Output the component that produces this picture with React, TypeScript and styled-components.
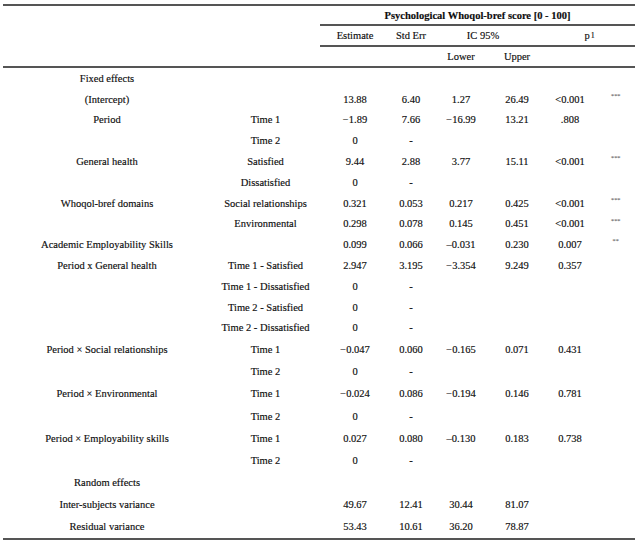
import React from "react";
import styled, { createGlobalStyle } from "styled-components";

const Global = createGlobalStyle`
  html, body { margin: 0; padding: 0; background: #fff; }
  body { font-family: "Liberation Serif", "Times New Roman", serif; color: #0d0d0d; }
`;

const COLS = "208px 109px 70px 42px 58px 54px 52px 39px";
const LINE = "2px solid #555";

const Page = styled.div`
  padding: 4px 0 0 3px;
`;

const Table = styled.div`
  width: 632px;
  border-top: ${LINE};
  border-bottom: ${LINE};
  font-size: 10.5px;
  -webkit-text-stroke: 0.15px #0d0d0d;
`;

const Head = styled.div`
  display: grid;
  grid-template-columns: ${COLS};
  grid-template-rows: 20px 21px 19px;
  border-bottom: ${LINE};
`;

const HeadCell = styled.div<{ $col: string; $row: number; $rule?: boolean; $shift?: number }>`
  grid-column: ${(p) => p.$col};
  grid-row: ${(p) => p.$row};
  display: flex;
  align-items: center;
  justify-content: center;
  box-sizing: border-box;
  border-bottom: ${(p) => (p.$rule ? LINE : "none")};
  padding-right: ${(p) => p.$shift ?? 0}px;
  white-space: nowrap;
`;

const Title = styled(HeadCell)`
  font-weight: bold;
`;

const Sup = styled.sup`
  font-size: 8px;
  vertical-align: 5px;
  line-height: 0;
  margin-left: 1px;
`;

const Row = styled.div<{ $tall?: boolean }>`
  display: grid;
  grid-template-columns: ${COLS};
  height: ${(p) => (p.$tall ? 22.2 : 20.8)}px;
  align-items: center;
`;

const Cell = styled.div`
  text-align: center;
  white-space: nowrap;
`;

const Stars = styled.div`
  text-align: center;
  align-self: start;
  font-size: 7px;
  padding-top: 3px;
  letter-spacing: -0.3px;
  color: #444;
  -webkit-text-stroke: 0;
`;

type R = { label?: string; sub?: string; v?: string[]; s?: string; tall?: boolean };

const rows: R[] = [
  { label: "Fixed effects" },
  { label: "(Intercept)", v: ["13.88", "6.40", "1.27", "26.49", "<0.001"], s: "***" },
  { label: "Period", sub: "Time 1", v: ["\u22121.89", "7.66", "\u221216.99", "13.21", ".808"] },
  { sub: "Time 2", v: ["0", "-"] },
  { label: "General health", sub: "Satisfied", v: ["9.44", "2.88", "3.77", "15.11", "<0.001"], s: "***" },
  { sub: "Dissatisfied", v: ["0", "-"] },
  { label: "Whoqol-bref domains", sub: "Social relationships", v: ["0.321", "0.053", "0.217", "0.425", "<0.001"], s: "***" },
  { sub: "Environmental", v: ["0.298", "0.078", "0.145", "0.451", "<0.001"], s: "***" },
  { label: "Academic Employability Skills", v: ["0.099", "0.066", "\u20130.031", "0.230", "0.007"], s: "**" },
  { label: "Period x General health", sub: "Time 1 - Satisfied", v: ["2.947", "3.195", "\u22123.354", "9.249", "0.357"] },
  { sub: "Time 1 - Dissatisfied", v: ["0", "-"] },
  { sub: "Time 2 - Satisfied", v: ["0", "-"] },
  { sub: "Time 2 - Dissatisfied", v: ["0", "-"] },
  { label: "Period \u00d7 Social relationships", sub: "Time 1", v: ["\u22120.047", "0.060", "\u22120.165", "0.071", "0.431"], tall: true },
  { sub: "Time 2", v: ["0", "-"], tall: true },
  { label: "Period \u00d7 Environmental", sub: "Time 1", v: ["\u22120.024", "0.086", "\u22120.194", "0.146", "0.781"], tall: true },
  { sub: "Time 2", v: ["0", "-"], tall: true },
  { label: "Period \u00d7 Employability skills", sub: "Time 1", v: ["0.027", "0.080", "\u20130.130", "0.183", "0.738"], tall: true },
  { sub: "Time 2", v: ["0", "-"], tall: true },
  { label: "Random effects", tall: true },
  { label: "Inter-subjects variance", v: ["49.67", "12.41", "30.44", "81.07"], tall: true },
  { label: "Residual variance", v: ["53.43", "10.61", "36.20", "78.87"], tall: true },
];

export default function App() {
  return (
    <Page>
      <Global />
      <Table>
        <Head>
          <Title $col="3 / 9" $row={1} $rule>
            Psychological Whoqol-bref score [0 - 100]
          </Title>
          <HeadCell $col="3" $row={2} $rule>Estimate</HeadCell>
          <HeadCell $col="4" $row={2} $rule>Std Err</HeadCell>
          <HeadCell $col="5 / 7" $row={2} $rule $shift={10}>IC 95%</HeadCell>
          <HeadCell $col="7 / 9" $row={2} $rule>
            p<Sup>1</Sup>
          </HeadCell>
          <HeadCell $col="5" $row={3}>Lower</HeadCell>
          <HeadCell $col="6" $row={3}>Upper</HeadCell>
        </Head>
        {rows.map((r, i) => {
          const v = r.v ?? [];
          return (
            <Row key={i} $tall={r.tall}>
              <Cell>{r.label ?? ""}</Cell>
              <Cell>{r.sub ?? ""}</Cell>
              {[0, 1, 2, 3, 4].map((k) => (
                <Cell key={k}>{v[k] ?? ""}</Cell>
              ))}
              <Stars>{r.s ?? ""}</Stars>
            </Row>
          );
        })}
      </Table>
    </Page>
  );
}
